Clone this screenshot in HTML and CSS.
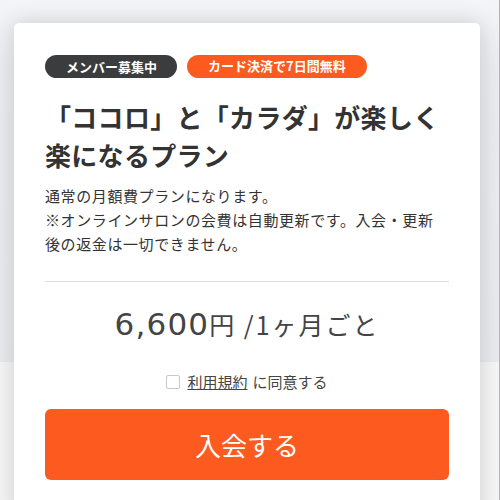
FILE: index.html
```html
<!DOCTYPE html>
<html lang="ja">
<head>
<meta charset="utf-8">
<link rel="stylesheet" href="styles.css">
</head>
<body>
<div class="page">
  <div class="card">
    <div class="badges">
      <span class="badge badge-dark">メンバー募集中</span>
      <span class="badge badge-orange">カード決済で7日間無料</span>
    </div>
    <h1 class="title">「ココロ」と「カラダ」が楽しく楽になるプラン</h1>
    <p class="desc">通常の月額費プランになります。<br>※オンラインサロンの会費は自動更新です。入会・更新後の返金は一切できません。</p>
    <hr class="divider">
    <div class="price"><span class="amount">6,600</span><span class="unit">円 /1ヶ月ごと</span></div>
    <label class="agree"><span class="box"></span><span class="terms">利用規約</span> に同意する</label>
    <button class="join">入会する</button>
  </div>
</div>
</body>
</html>
```
FILE: styles.css
```css
html, body { margin: 0; padding: 0; }
body {
  width: 500px;
  height: 500px;
  overflow: hidden;
  font-family: "Noto Sans CJK JP", "Noto Sans", sans-serif;
  color: #333;
  background: linear-gradient(#f4f5f7 0, #ebecef 70px, #e9eaed 362px, #f5f5f5 362px, #f5f5f5 100%);
}
.page {
  box-sizing: border-box;
  width: 500px;
  height: 500px;
  overflow: hidden;
  padding: 23px 19px 0 14px;
  border-right: 1px solid #e49ab9;
}
.card {
  background: #fff;
  border-radius: 5px;
  box-shadow: 0 0 22px rgba(0, 0, 0, 0.16);
  padding: 32px 31px 20px 31px;
  height: 500px;
  box-sizing: border-box;
}
.badges { display: flex; gap: 10px; }
.badge {
  display: inline-block;
  color: #fff;
  font-weight: 700;
  font-size: 13px;
  line-height: 23px;
  border-radius: 12px;
}
.badge-dark { background: #3b3c3e; padding: 0 20px 0 21px; }
.badge-orange { background: #fd5a1f; padding: 0 21px; line-height: 22px; }
.title {
  margin: 20px 0 0;
  font-size: 26px;
  line-height: 38px;
  font-weight: 700;
  color: #333;
  letter-spacing: 0.3px;
}
.desc {
  margin: 10px 0 0;
  font-size: 15px;
  line-height: 24px;
  letter-spacing: 0.6px;
  color: #333;
}
.divider {
  margin: 25px 0 0;
  border: 0;
  border-top: 1px solid #dcdcdc;
}
.price {
  text-align: center;
  margin-top: 20px;
  color: #444;
  line-height: 44px;
}
.amount { font-size: 31px; letter-spacing: 1.2px; font-family: "DejaVu Sans", sans-serif; }
.unit { font-size: 25px; letter-spacing: 2px; }
.agree {
  display: flex;
  justify-content: center;
  align-items: center;
  gap: 7px;
  margin-top: 22px;
  font-size: 15px;
  line-height: 20px;
  color: #444;
}
.box {
  width: 12px;
  height: 12px;
  border: 1px solid #c8c8c8;
  border-radius: 2px;
  background: #fff;
}
.terms { text-decoration: underline; margin-right: -2px; }
.join {
  display: block;
  width: 100%;
  margin-top: 17px;
  height: 71px;
  border: 0;
  border-radius: 6px;
  background: #fd5a20;
  color: #fff;
  font-family: "Noto Sans CJK JP", sans-serif;
  font-size: 26px;
}
```
